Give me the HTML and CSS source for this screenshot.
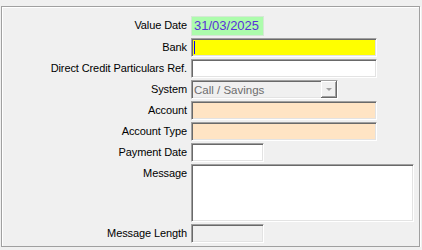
FILE: index.html
```html
<!DOCTYPE html>
<html lang="en">
<head>
  <meta charset="UTF-8">
  <title>Direct Credit</title>
  <link rel="stylesheet" href="styles.css">
</head>
<body>
  <div class="group">
    <div class="form">
      <div class="label">Value Date</div>
      <div class="date-box">31/03/2025</div>

      <div class="label">Bank</div>
      <div class="field long bank"><span class="caret"></span></div>

      <div class="label">Direct Credit Particulars Ref.</div>
      <div class="field long"></div>

      <div class="label">System</div>
      <div class="field combo">
        <span class="combo-text">Call / Savings</span>
        <span class="combo-btn"><span class="arrow"></span></span>
      </div>

      <div class="label">Account</div>
      <div class="field long peach"></div>

      <div class="label">Account Type</div>
      <div class="field long peach"></div>

      <div class="label">Payment Date</div>
      <div class="field short"></div>

      <div class="label top">Message</div>
      <div class="field message"></div>

      <div class="label">Message Length</div>
      <div class="field short disabled"></div>
    </div>
  </div>
</body>
</html>
```

FILE: styles.css
```css
body {
  margin: 0;
  background-color: #f0f0f0;
  font-family: "Liberation Sans", Arial, sans-serif;
  font-size: 11px;
  color: #000;
}

.group {
  margin: 6px 2px 0 1px;
  height: 241px;
  box-sizing: border-box;
  border: 1px solid #a0a0a0;
  box-shadow: inset 1px 1px #fff, 1px 1px #fff;
  padding: 9px 0 0 1px;
}

.form {
  display: grid;
  grid-template-columns: 184px auto;
  grid-template-rows: 20px repeat(6, 19px) 58px 19px;
  column-gap: 4px;
  row-gap: 2px;
  justify-items: start;
}

.label {
  justify-self: end;
  line-height: 19px;
  white-space: nowrap;
  letter-spacing: -0.1px;
}

.label.top {
  align-self: start;
}

.date-box {
  width: 73px;
  box-sizing: border-box;
  height: 20px;
  line-height: 18px;
  padding-left: 2px;
  background-color: #acfcac;
  border: 1px solid #d4e8d4;
  color: #5a32d8;
  font-size: 13px;
  overflow: hidden;
  white-space: nowrap;
}

.field {
  position: relative;
  box-sizing: border-box;
  height: 19px;
  background-color: #fff;
  border-top: 1px solid #a0a0a0;
  border-left: 1px solid #a0a0a0;
  border-right: 1px solid #fff;
  border-bottom: 1px solid #fff;
  box-shadow: inset 1px 1px #696969, inset -1px -1px #e3e3e3;
}

.long { width: 186px; }
.short { width: 73px; }

.bank { background-color: #ffff00; }
.peach { background-color: #ffe4c4; }
.disabled { background-color: #f0f0f0; }

.caret {
  position: absolute;
  left: 2px;
  top: 2px;
  width: 1px;
  height: 13px;
  background-color: #0000ff;
}

.combo {
  width: 147px;
  background-color: #f0f0f0;
  display: flex;
  align-items: center;
  justify-content: space-between;
}

.combo-text {
  color: #6d6d6d;
  padding-left: 2px;
  font-size: 11.5px;
}

.combo-btn {
  width: 16px;
  height: 17px;
  box-sizing: border-box;
  border-right: 1px solid #696969;
  border-bottom: 1px solid #696969;
  box-shadow: inset 1px 1px #fff, inset -1px -1px #a0a0a0;
  background-color: #f0f0f0;
  display: flex;
  align-items: center;
  justify-content: center;
}

.arrow {
  width: 0;
  height: 0;
  border-left: 3px solid transparent;
  border-right: 3px solid transparent;
  border-top: 3px solid #a0a0a0;
}

.message {
  width: 223px;
  height: 58px;
}
```
